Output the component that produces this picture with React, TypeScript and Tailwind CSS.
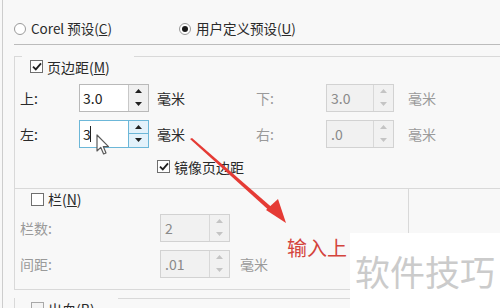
import React from "react";

function Radio({ checked }: { checked?: boolean }) {
  return (
    <span className="flex h-[12px] w-[12px] items-center justify-center rounded-full border border-[#9a9a9a] bg-white">
      {checked && <span className="h-[6px] w-[6px] rounded-full bg-[#1a1a1a]" />}
    </span>
  );
}

function Check({ checked, dim }: { checked?: boolean; dim?: boolean }) {
  return (
    <span
      className={
        dim
          ? "flex h-[13px] w-[13px] items-center justify-center border border-[#a8a8a8] bg-[#f4f4f4]"
          : "flex h-[13px] w-[13px] items-center justify-center border border-[#6f6f6f] bg-white"
      }
    >
      {checked && (
        <svg width="10" height="9" viewBox="0 0 10 9">
          <path d="M1 4.6 L3.8 7.4 L9 1.4" fill="none" stroke="#202020" strokeWidth="1.8" />
        </svg>
      )}
    </span>
  );
}

function Spin({
  value,
  w,
  disabled,
  focused,
}: {
  value: string;
  w: string;
  disabled?: boolean;
  focused?: boolean;
}) {
  const box = focused
    ? "border-[#6cb7d8] bg-white"
    : disabled
    ? "border-[#d2d2d2] bg-[#f1f1f1]"
    : "border-[#b9b9b9] bg-white";
  const btn = focused
    ? "border-l border-[#6cb7d8] bg-[#e3f2fb]"
    : disabled
    ? "border-l border-[#d8d8d8] bg-[#f1f1f1]"
    : "border-l border-[#c8c8c8] bg-[#f0f0f0]";
  const arrow = disabled ? "#c4c4c4" : "#202020";
  return (
    <div className={`flex h-[28px] border ${w} ${box}`}>
      <div
        className={
          disabled
            ? "flex flex-1 items-center pl-[4px] text-[14px] leading-none text-[#8a8a8a]"
            : "relative flex flex-1 items-center pl-[3px] text-[14px] leading-none text-[#222]"
        }
      >
        {value}
      </div>
      <div className={`flex w-[20px] flex-col ${btn}`}>
        <div className="flex flex-1 items-center justify-center">
          <svg width="7" height="4" viewBox="0 0 7 4">
            <path d="M0 4 L3.5 0 L7 4 Z" fill={arrow} />
          </svg>
        </div>
        <div
          className={
            focused
              ? "flex flex-1 items-center justify-center border-t border-[#6cb7d8]"
              : "flex flex-1 items-center justify-center"
          }
        >
          <svg width="7" height="4" viewBox="0 0 7 4">
            <path d="M0 0 L7 0 L3.5 4 Z" fill={arrow} />
          </svg>
        </div>
      </div>
    </div>
  );
}

export default function App() {
  return (
    <div className="relative h-[308px] w-[500px] overflow-hidden bg-[#f8f8f8] font-['Noto_Sans_CJK_SC',sans-serif] text-[#2a2a2a]">
      <div className="ml-[2px] flex h-full flex-col border-l border-[#cdcdcd] pl-[11px]">
        {/* presets */}
        <div className="mt-[22px] flex h-[18px] items-center text-[13.5px] leading-none">
          <div className="flex w-[165px] items-center">
            <Radio />
            <span className="ml-[5px]">
              Corel 预设(<span className="underline">C</span>)
            </span>
          </div>
          <div className="flex items-center">
            <Radio checked />
            <span className="ml-[5px]">
              用户定义预设(<span className="underline">U</span>)
            </span>
          </div>
        </div>
        <div className="mt-[8px] border-t border-[#bcbcbc]" />

        {/* margins */}
        <div className="mt-[11px] flex flex-col border-l border-[#d9d9d9] pb-[11px]">
          <div className="flex">
            <div className="w-[7px] border-t border-[#d9d9d9]" />
            <div className="w-[112px]" />
            <div className="flex-1 border-t border-[#d9d9d9]" />
          </div>
          <div className="flex h-[20px] items-center pl-[15px] text-[14px] leading-none">
            <Check checked />
            <span className="ml-[4px]">
              页边距(<span className="underline">M</span>)
            </span>
          </div>
          <div className="mt-[7px] flex items-center pl-[5px] text-[14px] leading-none">
            <span className="w-[59px]">上:</span>
            <Spin value="3.0" w="w-[70px]" />
            <span className="ml-[8px] w-[99px]">毫米</span>
            <span className="w-[70px] text-[#9a9a9a]">下:</span>
            <Spin value="3.0" w="w-[68px]" disabled />
            <span className="ml-[14px] text-[#9a9a9a]">毫米</span>
          </div>
          <div className="mt-[8px] flex items-center pl-[5px] text-[14px] leading-none">
            <span className="w-[59px]">左:</span>
            <div className="relative">
              <Spin value="3" w="w-[70px]" focused />
              <span className="absolute left-[11px] top-[6px] h-[16px] w-[1px] bg-[#222]" />
            </div>
            <span className="ml-[8px] w-[99px]">毫米</span>
            <span className="w-[70px] text-[#9a9a9a]">右:</span>
            <Spin value=".0" w="w-[68px]" disabled />
            <span className="ml-[14px] text-[#9a9a9a]">毫米</span>
          </div>
          <div className="mt-[9px] flex h-[20px] items-center pl-[142px] text-[14px] leading-none">
            <Check checked />
            <span className="ml-[4px]">镜像页边距</span>
          </div>
        </div>

        {/* columns */}
        <div className="flex">
          <div className="flex h-[102px] w-[395px] flex-col border border-[#d9d9d9]">
            <div className="flex h-[21px] items-center pl-[16px] text-[14px] leading-none">
              <Check />
              <span className="ml-[4px]">
                栏(<span className="underline">N</span>)
              </span>
            </div>
            <div className="mt-[4px] flex items-center pl-[5px] text-[14px] leading-none text-[#9a9a9a]">
              <span className="w-[140px]">栏数:</span>
              <Spin value="2" w="w-[70px]" disabled />
            </div>
            <div className="mt-[8px] flex items-center pl-[5px] text-[14px] leading-none text-[#9a9a9a]">
              <span className="w-[140px]">间距:</span>
              <Spin value=".01" w="w-[70px]" disabled />
              <span className="ml-[10px]">毫米</span>
            </div>
          </div>
          <div className="flex-1 border-t border-[#d9d9d9]" />
        </div>

        {/* bleed */}
        <div className="mt-[8px] flex flex-col border-l border-[#d9d9d9]">
          <div className="flex">
            <div className="w-[103px]" />
            <div className="flex-1 border-t border-[#d9d9d9]" />
          </div>
          <div className="flex h-[20px] items-center pl-[16px] text-[14px] leading-none">
            <Check dim />
            <span className="ml-[4px]">出血(B)</span>
          </div>
        </div>
      </div>

      {/* annotation arrow */}
      <svg className="absolute left-0 top-0" width="500" height="308" viewBox="0 0 500 308">
        <polygon points="190,139 192,138 276,211 273,214" fill="#e53b35" />
        <polygon points="286,223 266,210 278,199" fill="#e53b35" />
      </svg>

      {/* mouse pointer */}
      <svg className="absolute left-[96px] top-[134px]" width="14" height="22" viewBox="0 0 14 22">
        <path
          d="M1 1 L1 17 L4.8 13.4 L7.6 20 L10 19 L7.3 12.6 L12.5 12.6 Z"
          fill="#ffffff"
          stroke="#5a5a5a"
          strokeWidth="1.2"
          strokeLinejoin="round"
        />
      </svg>

      <div className="absolute left-[287px] top-[238px] text-[20px] leading-none text-[#d4443c]">输入上</div>

      <div className="absolute left-[350px] top-[233px] flex h-[75px] w-[150px] items-center justify-center bg-white text-[35px] leading-none text-[#cbcbcb]">
        软件技巧
      </div>
    </div>
  );
}
